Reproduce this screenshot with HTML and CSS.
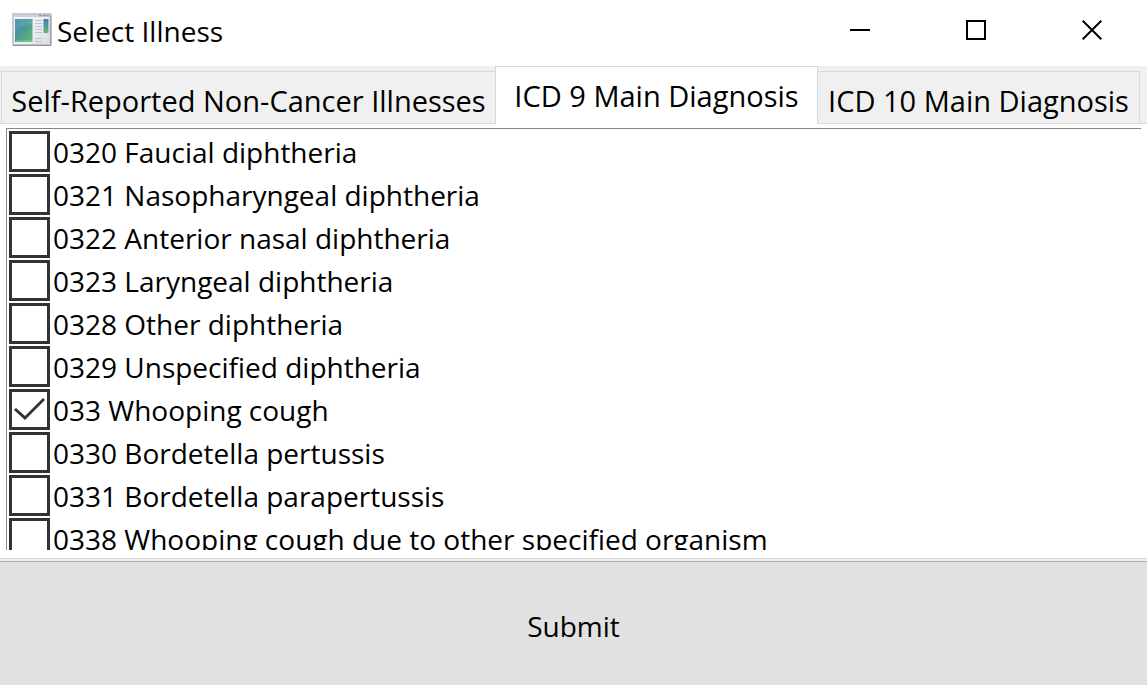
FILE: index.html
```html
<!DOCTYPE html>
<html lang="en">
<head>
<meta charset="utf-8">
<meta name="viewport" content="width=device-width, initial-scale=1">
<title>Select Illness</title>
<link rel="stylesheet" href="styles.css">
</head>
<body>
<header class="titlebar">
  <svg class="app-icon" viewBox="0 0 40 34" aria-hidden="true">
    <defs>
      <linearGradient id="pane" x1="0" y1="0" x2="1" y2="1">
        <stop offset="0" stop-color="#3f7fae"/>
        <stop offset=".5" stop-color="#4a9c93"/>
        <stop offset="1" stop-color="#6cbc74"/>
      </linearGradient>
      <linearGradient id="side" x1="0" y1="0" x2="0" y2="1">
        <stop offset="0" stop-color="#3f7fb4"/>
        <stop offset="1" stop-color="#62b878"/>
      </linearGradient>
      <linearGradient id="frame" x1="0" y1="0" x2="1" y2="1">
        <stop offset="0" stop-color="#ffffff"/>
        <stop offset="1" stop-color="#dcdde2"/>
      </linearGradient>
    </defs>
    <rect x="1" y="1" width="37.500" height="31" fill="url(#frame)" stroke="#b4b8c0" stroke-width="1.500"/>
    <rect x="2" y="2" width="36" height="2" fill="#c9d0dc"/>
    <path d="M27 2.500h10" stroke="#8d949f" stroke-width="1.500" stroke-dasharray="3 1"/>
    <rect x="2.500" y="5.500" width="18.500" height="24" fill="url(#pane)" stroke="#e9f2ee"/>
    <path d="M3 18Q10 11 20.500 11V6H3Z" fill="#fff" opacity=".12"/>
    <path d="M4 28h16" stroke="#8fd27e" stroke-width="1"/>
    <path d="M23 7.500h7M23 10.500h7M23 13.500h7M23 16.500h7M23 19.500h7M23 25.500h7M23 28.500h7" stroke="#c3c5c9" stroke-width="1"/>
    <rect x="31.500" y="6" width="5" height="14" fill="url(#side)"/>
    <path d="M1 32.500h38V2" fill="none" stroke="#8e9199" stroke-width="1"/>
  </svg>
  <h1 class="title">Select Illness</h1>
  <div class="window-controls">
    <button class="window-button" type="button" aria-label="Minimize">
      <svg class="glyph" viewBox="0 0 20 20" aria-hidden="true"><path d="M0 10h20"/></svg>
    </button>
    <button class="window-button" type="button" aria-label="Maximize">
      <svg class="glyph" viewBox="0 0 20 20" aria-hidden="true"><path d="M1 1h18v18H1Z"/></svg>
    </button>
    <button class="window-button" type="button" aria-label="Close">
      <svg class="glyph" viewBox="0 0 20 20" aria-hidden="true"><path d="M.7.700l18.600 18.600M19.300.700L.7 19.300"/></svg>
    </button>
  </div>
</header>
<main class="content">
  <div class="tabs" role="tablist">
    <button class="tab" type="button" role="tab" aria-selected="false">Self-Reported Non-Cancer Illnesses</button>
    <button class="tab tab-active" type="button" role="tab" aria-selected="true" aria-controls="icd9">ICD 9 Main Diagnosis</button>
    <button class="tab" type="button" role="tab" aria-selected="false">ICD 10 Main Diagnosis</button>
  </div>
  <section class="panel" id="icd9" role="tabpanel">
    <div class="list">
      <label class="item"><input class="check" type="checkbox">0320 Faucial diphtheria</label>
      <label class="item"><input class="check" type="checkbox">0321 Nasopharyngeal diphtheria</label>
      <label class="item"><input class="check" type="checkbox">0322 Anterior nasal diphtheria</label>
      <label class="item"><input class="check" type="checkbox">0323 Laryngeal diphtheria</label>
      <label class="item"><input class="check" type="checkbox">0328 Other diphtheria</label>
      <label class="item"><input class="check" type="checkbox">0329 Unspecified diphtheria</label>
      <label class="item"><input class="check" type="checkbox" checked>033 Whooping cough</label>
      <label class="item"><input class="check" type="checkbox">0330 Bordetella pertussis</label>
      <label class="item"><input class="check" type="checkbox">0331 Bordetella parapertussis</label>
      <label class="item"><input class="check" type="checkbox">0338 Whooping cough due to other specified organism</label>
    </div>
  </section>
</main>
<button class="submit" type="submit">Submit</button>
</body>
</html>
```
FILE: styles.css
```css
* {
  box-sizing: border-box;
}

body {
  margin: 0;
  height: 100vh;
  display: flex;
  flex-direction: column;
  overflow: hidden;
  background: #f0f0f0;
  color: #000;
  font: 28px/40px "Open Sans", "Noto Sans", sans-serif;
}

button {
  margin: 0;
  padding: 0;
  border: 0;
  border-radius: 0;
  background: none;
  color: inherit;
  font: inherit;
}

.titlebar {
  flex: none;
  display: flex;
  align-items: center;
  height: 66px;
  padding: 0 7px 6px 12px;
  background: #fff;
}

.app-icon {
  flex: none;
  width: 40px;
  height: 34px;
  margin-right: 5px;
}

.title {
  margin: 0;
  padding-top: 2px;
  font: inherit;
  white-space: nowrap;
}

.window-controls {
  display: flex;
  gap: 20px;
  margin-left: auto;
}

.window-button {
  display: grid;
  place-items: center;
  width: 96px;
  height: 60px;
}

.glyph {
  width: 20px;
  height: 20px;
  fill: none;
  stroke: #000;
  stroke-width: 2;
}

.content {
  flex: 1;
  min-height: 0;
  display: flex;
  flex-direction: column;
}

.tabs {
  flex: none;
  display: grid;
  grid-template-columns: 494fr 323fr 322fr;
  align-items: end;
  height: 58px;
  padding: 0 7px 0 1px;
  border-bottom: 1px solid #d9d9d9;
  font-size: 29px;
}

.tab {
  height: 52px;
  padding-top: 6px;
  border: 1px solid #d9d9d9;
  border-width: 1px 1px 0 0;
  white-space: nowrap;
}

.tab:first-child {
  border-width: 1px 0 0 1px;
}

.tab-active {
  height: 58px;
  margin-bottom: -1px;
  padding: 0;
  border-width: 1px 1px 0;
  background: #fff;
}

.panel {
  flex: 1;
  min-height: 0;
  display: flex;
  padding: 4px 6px 8px;
  background: #fff;
  border-bottom: 1px solid #d9d9d9;
}

.list {
  flex: 1;
  overflow: hidden;
  padding: 2px;
  border: 1px solid #828790;
  border-width: 1px 0 0 1px;
}

.item {
  display: flex;
  align-items: flex-start;
  gap: 3px;
  height: 43px;
  line-height: 43px;
  white-space: nowrap;
}

.check {
  appearance: none;
  flex: none;
  display: grid;
  width: 41px;
  height: 41px;
  margin: 0;
  border: 3px solid #333;
  background: #fff;
}

.check:checked::before {
  content: "";
  background: #333;
  clip-path: polygon(2px 18px, 4px 16px, 13px 24px, 31px 6px, 33px 8px, 13px 28px);
}

.submit {
  flex: none;
  height: 124px;
  margin-top: 2px;
  padding-top: 4px;
  border-top: 1px solid #adadad;
  background: #e1e1e1;
}
```
